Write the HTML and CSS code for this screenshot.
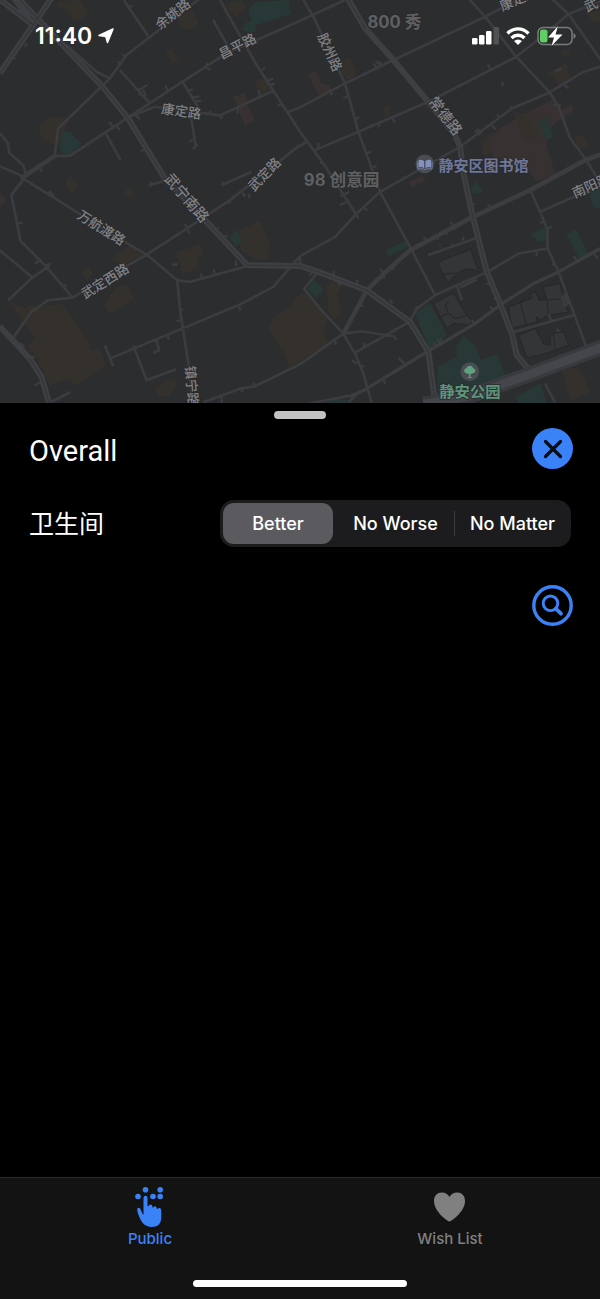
FILE: index.html
```html
<!DOCTYPE html>
<html lang="zh">
<head>
<meta charset="utf-8">
<meta name="viewport" content="width=device-width, initial-scale=1">
<title>Overall</title>
<link rel="stylesheet" href="styles.css">
</head>
<body>
<header class="map-area">
  <svg class="map" viewBox="0 0 1800 1208" preserveAspectRatio="xMidYMid slice" role="img" aria-label="地图">
    <g class="brown">
      <path d="M172 8 210 0 245 2 265 45 222 66 205 34 175 22zM535 52 575 28 597 70 560 92 540 75zM497 158 515 145 538 178 520 188zM118 375 150 352 200 350 206 362 180 430 152 432 122 410zM195 545 212 528 238 560 212 582zM370 578 388 562 405 578 385 595zM675 15 725 0 742 25 705 52zM770 238 805 228 810 270 785 280 768 260z"/>
      <path d="M1025 180 1050 172 1070 225 1045 240 1025 225zM1150 320 1168 318 1172 345 1155 350zM1645 215 1700 190 1710 240 1680 260zM1680 160 1698 145 1712 160 1692 172zM1760 40 1800 30 1800 70 1775 60zM1722 415 1745 402 1765 435 1738 448zM1440 425 1480 395 1510 450 1450 468z"/>
      <path d="M30 905 75 925 90 915 120 920 185 910 268 1025 270 1050 300 1048 318 1095 225 1158 205 1135 148 1155 105 1060 80 1038 105 1015 80 980 65 960zM335 775 390 735 428 765 370 795zM245 815 265 798 280 820 260 838zM312 915 345 865 380 852 405 895 330 940zM528 757 600 732 610 765 592 775 596 802 548 822zM710 695 780 660 808 725 805 778 770 780 722 750zM465 1165 500 1138 525 1135 530 1160 505 1188 475 1188zM805 985 825 945 860 930 900 880 920 875 985 955 970 990 985 1030 900 1082 868 1103 858 1070zM980 855 1000 840 1030 850 1010 880 1025 935 1005 960 985 935zM1685 1110 1735 1100 1770 1175 1710 1200zM1315 730 1325 728 1328 745 1318 748z"/>
    </g>
    <g class="red">
      <path d="M700 290 735 278 742 315 765 360 735 378zM925 225 945 210 965 250 990 255 992 278 955 285zM1465 420 1500 385 1540 360 1655 300 1680 330 1715 312 1720 332 1670 365 1640 395 1640 440 1665 520 1610 545 1590 515 1510 480 1480 470zM1225 545 1265 527 1278 540 1235 562zM0 580 18 590 15 610 0 618z"/>
    </g>
    <path class="brown" d="M1540 335 1580 345 1625 395 1600 430 1570 415z"/>
    <g class="green">
      <path d="M745 28 770 5 865 0 872 42 770 75 765 98 728 92 735 70 755 65zM188 390 215 398 245 435 205 465 178 450zM688 710 710 690 728 722 708 740zM1615 360 1635 348 1660 408 1638 422zM1412 560 1428 545 1450 575 1418 582zM1765 575 1800 565 1800 625 1780 620z"/>
      <path d="M1158 750 1215 722 1225 740 1165 768zM1588 702 1640 680 1638 720 1615 725zM1698 702 1728 688 1765 765 1738 778zM922 865 942 838 972 868 948 895zM1245 940 1290 908 1340 1005 1290 1050zM1312 1098 1370 1070 1368 1040 1390 1005 1425 1035 1442 1078 1490 1062 1520 1135 1505 1160 1312 1202zM1545 1190 1620 1150 1640 1208 1555 1208zM970 1208 1010 1195 1050 1200 1045 1208z"/>
    </g>
    <g class="building">
      <path d="M1315 795Q1318 780 1340 775L1412 747 1435 815Q1405 795 1370 820L1345 850 1328 822zM1300 910 1360 878 1400 945 1420 965 1405 975 1360 970 1340 985zM1525 920 1595 893 1590 880 1605 875 1618 900 1640 898 1645 945 1620 960 1610 950 1610 965 1535 985zM1628 860 1680 850 1690 900 1705 935 1645 945 1640 900zM1555 1005 1605 985 1630 1030 1650 1035 1650 1000 1690 995 1705 1035 1635 1060 1580 1072z"/>
      <path d="M1560 908 1578 972M1328 822 1370 818M1318 950 1345 940 1335 915 1345 905M1345 940 1365 955 1400 945M1630 865 1640 900 1690 895M1660 1000 1665 1050"/>
    </g>
    <g class="road">
      <path d="M372 0 390 28 445 108M620 -20 380 165 330 235 175 385 165 465 70 535M165 465 68 528 0 498M0 398 25 430 28 458 70 495 80 525 35 585 62 722 140 800 218 892M62 530 350 710 440 763 532 840 570 845 740 798 900 800M70 535 170 467 210 467 385 352 548 245 680 160 900 62M385 352 465 320 660 346 820 272M548 245 600 330M573 350 587 435M360 210 450 310M318 400 362 480M640 60 690 150M660 0 770 195 900 395M865 335 900 322M330 235 290 215 200 135M900 435 690 600 600 660 440 763M665 555 755 515M450 555 500 540M0 750 98 832 150 795M25 900 98 832M40 1013 95 935 145 900 218 892 440 763M330 1075 715 915 820 860 900 768M315 1035 340 1098M400 1035 440 1140 528 1107M470 1020 478 1050 460 1058M532 840 542 940 567 1100 578 1208M155 1205 212 1175M610 1206 720 1165 765 1158 900 1092"/>
      <g transform="translate(900 0)">
        <path d="M10 0 40 50 135 250 175 395 240 575 335 750 405 885M0 62 135 0M0 322 135 250 280 180 555 50 660 -5M45 450 175 395 385 305 648 170 740 98 805 42 900 5M500 -10 555 50 648 170 748 277 775 320 810 415 855 475 895 540M750 -8 805 42 905 185M900 200 850 215 748 277 635 325 480 440 240 575 170 640 105 710 0 768M0 395 70 490 170 645M0 438 20 425M690 570 720 635 742 690 742 745 775 815 860 1045M720 635 900 555M383 765 525 715M328 965 350 925 405 885 470 855 563 815 655 760 742 745M0 795 0 768M55 815 12 865 60 925 130 1000 165 1060 190 1120 215 1208M130 1000 185 993 275 1007M165 1057 328 965M0 1092 130 1000M640 995 820 945M735 1150 765 1208M470 855 485 900M480 862 530 838M745 940 752 960M790 880 803 908 795 916 785 888M0 1215 155 1185 200 1165M145 1208 175 1175"/>
      </g>
    </g>
    <g class="ticks">
      <path d="M385 26 397 15M375 178 370 162M362 198 355 183M418 270 443 255M430 270 438 288M415 284 426 280M505 274 497 257M610 200 632 210M618 196 624 190M565 272 578 268M575 292 598 290M582 304 604 303M632 344 632 332M665 346 664 358M715 322 712 340M780 290 775 270M787 210 795 202M805 242 820 235M810 256 824 250M832 318 846 310M345 385 328 366M350 375 360 390M408 345 420 357M435 448 422 453M578 420 568 424M578 447 594 432M120 505 128 515M145 575 155 590M150 572 162 588M455 545 448 558M668 545 668 558M690 610 685 597M735 590 728 577M745 580 750 595M60 140 72 125M75 140 82 130M40 170 46 178"/>
      <path d="M1345 105 1342 98M1120 130 1128 124M1120 190 1135 208M1128 182 1142 200M1143 195 1140 184M1470 206 1462 193M1504 245 1510 258M990 268 996 285M1030 292 1044 290M1066 358 1078 350M1138 380 1135 370M1178 355 1185 368M1100 460 1114 454M1118 502 1130 496M970 484 960 490M955 440 955 428M1020 615 1048 600M1022 588 1048 575M1475 375 1486 388M1490 343 1500 354M1425 390 1440 406M1432 386 1444 400M1535 326 1530 318M1612 298 1608 292M1665 215 1685 205M1660 315 1682 315M1694 255 1704 265M1540 15 1530 20M1530 20 1540 12"/>
      <path d="M55 670 68 667M93 755 102 760M105 790 118 782M140 795 152 790M200 852 192 860M60 1028 74 1040M95 1072 106 1068M105 1155 124 1145M555 672 568 700M645 690 657 682M670 710 684 706M605 820 603 832M640 808 645 820M517 794 534 792M540 928 550 928M530 963 546 957M502 1008 508 1018M714 915 722 930M722 1165 728 1175M760 1146 764 1158M665 1190 665 1208M708 780 708 797M932 745 935 750M1000 812 1002 825M1072 838 1070 852M1015 843 1020 856M927 825 942 815M1178 908 1168 900M1065 635 1075 655M1090 620 1102 632M1140 806 1150 816M1150 828 1154 836M1175 808 1183 800M1275 720 1272 710M1310 707 1315 718M1335 692 1342 704M1352 665 1368 688M1358 740 1358 730M1390 720 1388 710M1468 618 1463 612M1425 612 1415 614M1620 668 1633 664M1640 685 1655 680M1612 755 1608 768M1655 792 1665 792M1720 768 1732 782M1780 760 1794 775M1460 850 1470 855M1480 895 1490 898M1470 918 1482 932M1415 960 1425 972M1248 918 1252 928M1172 900 1176 910M1080 915 1090 918M1185 995 1182 984M1178 1005 1190 1018M1092 1040 1092 1028M1055 1080 1072 1090M1080 1098 1092 1098M1195 1072 1220 1098M1148 1133 1156 1152M1300 1026 1308 1040M1312 1018 1322 1032M1320 1014 1328 1026M1005 1022 1008 1034M1670 985 1676 995"/>
    </g>
    <g class="middle">
      <path d="M1030 1000 1100 870 1160 812 1230 750 1330 697 1418 650 1590 570 1755 480 1810 460"/>
      <path class="slim" d="M1050 1190 1100 1165 1280 1055 1425 970 1505 910 1600 850 1675 815 1800 745"/>
    </g>
    <path class="major-edge" d="M-10 -10 100 75M40 -10 100 75M155 -5 0 220M60 0 310 262 385 355 495 535 615 660 742 795 900 797 955 815 1100 870 1230 965 1285 1055 1305 1208M1040 -10 1095 85 1180 180 1280 300 1365 405 1380 440 1390 520 1418 650 1460 815 1500 910 1535 1000 1550 1065 1595 1118M0 978 90 1075 125 1130 148 1208"/>
    <path class="major-line" d="M-10 -10 100 75M155 -5 0 220M60 0 310 262 385 355 495 535 615 660 742 795 900 797 955 815 1100 870 1230 965 1285 1055 1305 1208M1040 -10 1095 85M1380 440 1390 520 1418 650 1460 815 1500 910 1535 1000 1550 1065 1595 1118M90 1075 125 1130 148 1208"/>
    <path class="avenue-edge" d="M1270 1212 1400 1190 1600 1118 1820 1035"/>
    <path class="avenue" d="M1270 1212 1400 1190 1600 1118 1820 1035"/>
    <g class="street">
      <text transform="translate(518 42) rotate(-38)">余姚路</text>
      <text transform="translate(712 138) rotate(-27)">昌平路</text>
      <text transform="translate(544 333) rotate(8)">康定路</text>
      <text class="wide-street" transform="translate(560 594) rotate(49)">武宁南路</text>
      <text transform="translate(793 522) rotate(-46)">武定路</text>
      <text transform="translate(990 156) rotate(66)">胶州路</text>
      <text class="wide-street" transform="translate(1335 348) rotate(52)">常德路</text>
      <text transform="translate(1555 -4) rotate(-24)">康定路</text>
      <text transform="translate(1790 6) rotate(-24)">武定</text>
      <text transform="translate(1772 556) rotate(-24)">南阳路</text>
      <text transform="translate(305 682) rotate(32)">万航渡路</text>
      <text transform="translate(315 842) rotate(-32)">武定西路</text>
      <text transform="translate(576 1156) rotate(85)">镇宁路</text>
    </g>
    <g class="district">
      <text x="1183" y="65">800 秀</text>
      <text x="1025" y="541">98 创意园</text>
    </g>
    <circle class="poi" cx="1274" cy="491" r="28"/>
    <path class="library-icon" d="M1272 483Q1264 476 1255 480V502Q1264 499 1272 504zM1276 483Q1284 476 1293 480V502Q1284 499 1276 504z"/>
    <path class="library-cover" d="M1252 485V507Q1264 503 1274 508 1284 503 1296 507V485"/>
    <text class="library" x="1450" y="495">静安区图书馆</text>
    <circle class="poi" cx="1409" cy="1114" r="28"/>
    <path class="park-icon" d="M1398 1119Q1391 1117 1392 1110 1393 1104 1399 1104 1401 1096 1410 1096 1418 1097 1419 1104 1426 1106 1426 1112 1424 1119 1417 1119L1411 1122V1130H1416V1132H1402V1130H1407V1122z"/>
    <text class="park" x="1409" y="1175">静安公园</text>
  </svg>
  <div class="status">
    <div class="clock">11:40
      <svg width="16" height="16" viewBox="0 0 16 16"><path d="M15 1 9.500 14.500 7.800 8.500 1 7.500z" fill="#fff" stroke="#fff" stroke-width="1.500" stroke-linejoin="round"/></svg>
    </div>
    <div class="indicators">
      <svg width="27" height="18" viewBox="0 0 27 18" fill="#fff"><rect y="11" width="5.500" height="6.500" rx="1.300"/><rect x="7" y="8" width="5.500" height="9.500" rx="1.300"/><rect x="14" y="4" width="5.500" height="13.500" rx="1.300"/><rect x="21.500" width="5.500" height="17.500" rx="1.300" fill="#505153"/></svg>
      <svg width="24" height="18" viewBox="0 0 24 18" fill="none" stroke="#fff" stroke-width="3.400"><path d="M1.500 6.500C7.500.3 16.500.3 22.500 6.500M5.500 11C9.300 7.400 14.700 7.400 18.500 11"/><path d="M8 14Q12 11 16 14L12 18z" fill="#fff" stroke="none"/></svg>
      <svg width="39" height="20" viewBox="0 0 39 20"><rect x="1" y="1.500" width="34" height="17" rx="5" fill="none" stroke="#7b7c7e" stroke-width="1.500"/><rect x="3" y="3.500" width="7.500" height="13" rx="2.500" fill="#5fce63"/><path d="M36.500 7Q41 10 36.500 13z" fill="#7b7c7e"/><path d="M21 0 11 11.500H17L14.500 20 25.500 8.500H18.500z" fill="#fff" stroke="#2c2d2f" stroke-width="1" paint-order="stroke"/></svg>
    </div>
  </div>
</header>
<main class="sheet">
  <div class="handle"></div>
  <div class="title-row">
    <h1>Overall</h1>
    <button class="round close" type="button" aria-label="Close">
      <svg width="20" height="20" viewBox="0 0 20 20"><path d="M2.500 2.500 17.500 17.500M17.500 2.500 2.500 17.500" fill="none" stroke="#050b14" stroke-width="3.200" stroke-linecap="round"/></svg>
    </button>
  </div>
  <div class="filter" role="radiogroup" aria-labelledby="filter-name">
    <span class="filter-name" id="filter-name">卫生间</span>
    <div class="segments">
      <label class="segment"><input type="radio" name="restroom" checked><span>Better</span></label>
      <label class="segment"><input type="radio" name="restroom"><span>No Worse</span></label>
      <label class="segment divided"><input type="radio" name="restroom"><span>No Matter</span></label>
    </div>
  </div>
  <button class="round search" type="button" aria-label="Search">
    <svg width="41" height="41" viewBox="0 0 41 41" fill="none" stroke="#3a82f7"><circle cx="20.500" cy="20.500" r="18.700" stroke-width="3.400"/><circle cx="18.500" cy="18.300" r="7.300" stroke-width="2.900"/><path d="M23.800 23.600 29 28.700" stroke-width="3.800" stroke-linecap="round"/></svg>
  </button>
</main>
<nav class="tabs">
  <div class="tab-row">
    <a class="tab active" href="#public">
      <svg width="30" height="41" viewBox="0 0 30 41" fill="currentColor"><circle cx="3" cy="9.500" r="2.800"/><circle cx="10.500" cy="2.800" r="2.800"/><circle cx="18" cy="9.500" r="2.800"/><circle cx="25.200" cy="9.500" r="2.800"/><circle cx="25.200" cy="2.800" r="2.800"/><path d="M8.500 11Q8.500 8.700 10.500 8.700T12.500 11V19H13.800Q13.800 17.500 15.500 17.500T17.500 19.500V20.500H18.500Q18.700 19.200 20 19.200T21.800 21V22H22.500Q22.800 21 24.300 21 26.300 21 26.300 24V31Q26 40 16.500 40 9.500 40 6 33.500 2.400 26.500 2.200 22.500 2.200 20.300 4 20.700 5.200 21 5.900 23L7.800 27.500H8.500z"/></svg>
      <span>Public</span>
    </a>
    <a class="tab" href="#wish">
      <svg width="32" height="41" viewBox="0 0 32 41" fill="currentColor"><path d="M15.500 34.500C13.500 34.500 0 24.500 0 14 0 8.500 3.500 5.500 7.700 5.500 11.500 5.500 14.200 7.500 15.500 10 16.800 7.500 19.500 5.500 23.300 5.500 27.500 5.500 31 8.500 31 14 31 24.500 17.500 34.500 15.500 34.500z"/></svg>
      <span>Wish List</span>
    </a>
  </div>
  <div class="home"></div>
</nav>
</body>
</html>
```
FILE: styles.css
```css
* { box-sizing: border-box; }

body {
  margin: 0;
  min-height: 100vh;
  display: flex;
  flex-direction: column;
  background: #000;
  color: #fff;
  font-family: Inter, "Noto Sans CJK SC", sans-serif;
}

.map-area { position: relative; background: #2c2d2f; }
.map { display: block; width: 100%; aspect-ratio: 600 / 403; }

.brown { fill: #34312d; }
.red { fill: #383132; }
.green { fill: #283836; }
.building { fill: #343537; stroke: #27282a; stroke-width: 3; }
.road, .ticks, .middle, .major-edge, .major-line, .avenue, .avenue-edge { fill: none; stroke-linejoin: round; }
.road { stroke: #3b3c3f; stroke-width: 8; }
.ticks { stroke: #3b3c3f; stroke-width: 7; }
.middle { stroke: #3c3d40; stroke-width: 14; }
.slim { stroke-width: 10; }
.major-edge { stroke: #3e3f42; stroke-width: 18; }
.major-line { stroke: #333437; stroke-width: 3; }
.avenue-edge { stroke: #393a3d; stroke-width: 46; }
.avenue { stroke: #45464b; stroke-width: 26; }

.map text {
  text-anchor: middle;
  dominant-baseline: central;
  font-family: Inter, "Noto Sans CJK SC", sans-serif;
  stroke: #2a2b2d;
  stroke-width: 5px;
  paint-order: stroke;
}
.street { font-size: 40px; font-weight: 500; fill: #808185; }
.wide-street { font-size: 44px; }
.district { font-size: 50px; font-weight: 700; fill: #5f6062; }
.library { font-size: 45px; font-weight: 700; fill: #6e7799; }
.park { font-size: 46px; font-weight: 700; fill: #5d957d; }
.poi { fill: #494d51; }
.library-icon { fill: #8490bd; }
.library-cover { fill: none; stroke: #8490bd; stroke-width: 2; }
.park-icon { fill: #60a181; }

.status {
  position: absolute;
  inset: 0 0 auto;
  display: flex;
  justify-content: space-between;
  align-items: center;
  height: 72px;
  padding: 0 24px 0 35px;
}
.clock { display: flex; align-items: center; gap: 6px; font-size: 23px; font-weight: 600; }
.indicators { display: flex; align-items: center; gap: 7px; }
.indicators svg, .clock svg, .round svg, .tab svg { display: block; }

.sheet { flex: 1; padding: 8px 27px 40px; }
.handle { width: 52px; height: 8px; margin: 0 auto; border-radius: 4px; background: #c3c3c2; }
.title-row { display: flex; align-items: center; justify-content: space-between; margin-top: 9px; }
h1 { margin: 4px 0 0 2px; font-family: Roboto, sans-serif; font-size: 29px; line-height: 36px; font-weight: 400; }

.round {
  display: grid;
  place-items: center;
  width: 41px;
  height: 41px;
  padding: 0;
  border: 0;
  border-radius: 50%;
  background: none;
}
.close { background: #3a82f7; }
.search { margin: 38px 0 0 auto; }

.filter {
  display: flex;
  align-items: center;
  justify-content: space-between;
  margin: 31px 2px 0;
}
.filter-name { font-size: 25px; line-height: 46px; }
.segments {
  flex: 0 1 351px;
  display: grid;
  grid-template-columns: 114px 1fr 1fr;
  padding: 3px 0 3px 3px;
  border-radius: 14px;
  background: #1c1c1e;
}
.segment { position: relative; display: flex; }
.segment input { position: absolute; inset: 0; margin: 0; opacity: 0; }
.segment span {
  flex: 1;
  border-radius: 11px;
  font-size: 18px;
  line-height: 41px;
  font-weight: 500;
  text-align: center;
  white-space: nowrap;
}
.segment:first-child span { margin-right: 4px; }
.segment input:checked + span { background: #5b5a5f; }
.divided::before {
  content: "";
  position: absolute;
  top: 8px;
  bottom: 8px;
  left: 0;
  width: 1px;
  background: #3c3c3f;
}

.tabs { border-top: 1px solid #2b2b2b; background: #131313; padding: 9px 0 12px; }
.tab-row { display: grid; grid-template-columns: 1fr 1fr; }
.tab {
  display: flex;
  flex-direction: column;
  align-items: center;
  gap: 1px;
  color: #808080;
  font-size: 15px;
  line-height: 20px;
  font-weight: 500;
  text-decoration: none;
}
.active { color: #3a82f7; }
.home { width: 214px; height: 7px; margin: 31px auto 0; border-radius: 4px; background: #fff; }
```
